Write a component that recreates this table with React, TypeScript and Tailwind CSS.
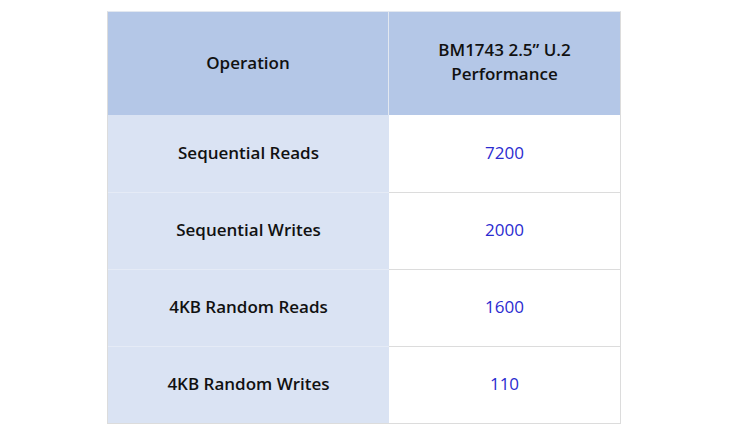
import React from "react";

const rows = [
  ["Sequential Reads", "7200"],
  ["Sequential Writes", "2000"],
  ["4KB Random Reads", "1600"],
  ["4KB Random Writes", "110"],
];

export default function App() {
  return (
    <div
      className="w-[735px] h-[435px] bg-white pt-[11px] pl-[107px]"
      style={{ fontFamily: '"Open Sans", "Noto Sans", sans-serif' }}
    >
      <div className="grid grid-cols-[281px_231px] w-fit border border-[#dcdcdc] border-t-[#e3e8f0]">
        <div className="h-[103px] pb-[2px] bg-[#b4c7e7] flex items-center justify-center text-[17px] font-semibold text-[#111] border-r border-[#e3e8f0]">
          Operation
        </div>
        <div className="h-[103px] pb-[3px] bg-[#b4c7e7] flex items-center justify-center text-center text-[17px] leading-[24px] font-semibold text-[#111]">
          BM1743 2.5” U.2
          <br />
          Performance
        </div>
        {rows.map(([op, v], i) => (
          <React.Fragment key={op}>
            <div
              className={`h-[77px] pb-[2px] bg-[#dae3f3] flex items-center justify-center text-[17px] font-semibold text-[#111] ${
                i > 0 ? "border-t border-[#e5ebf6]" : ""
              }`}
            >
              {op}
            </div>
            <div
              className={`h-[77px] pb-[2px] bg-white flex items-center justify-center text-[17px] text-[#2b2bd0] ${
                i > 0 ? "border-t border-[#dcdcdc]" : ""
              }`}
            >
              {v}
            </div>
          </React.Fragment>
        ))}
      </div>
    </div>
  );
}
